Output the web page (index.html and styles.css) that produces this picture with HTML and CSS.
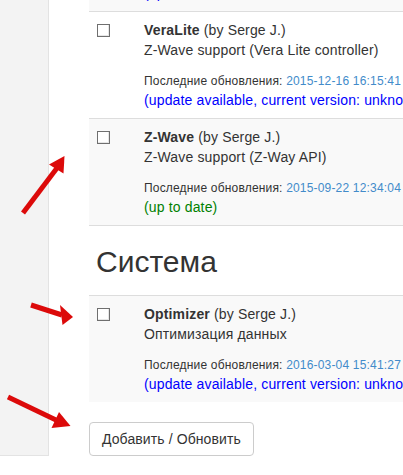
FILE: index.html
```html
<!DOCTYPE html>
<html lang="ru">
  <head>
    <meta charset="UTF-8" />
    <meta name="viewport" content="width=device-width, initial-scale=1.0" />
    <title>Плагины</title>
    <link rel="stylesheet" href="styles.css">
  </head>
  <body>
    <div class="page">
      <!-- Sidebar -->
      <aside class="sidebar"></aside>

      <!-- Plugin list -->
      <main class="content">
        <table class="plugins">
          <tbody>
            <tr>
              <td class="check"><input type="checkbox" /></td>
              <td>
                <div><b>Vera</b> (by Serge J.)</div>
                <p>Z-Wave support (Vera controller)</p>
                <div><small>Последние обновления: <span class="date">2015-12-16 16:10:02</span></small></div>
                <div class="status-new">(update available, current version: unknown)</div>
              </td>
            </tr>
            <tr>
              <td class="check"><input type="checkbox" /></td>
              <td>
                <div><b>VeraLite</b> (by Serge J.)</div>
                <p>Z-Wave support (Vera Lite controller)</p>
                <div><small>Последние обновления: <span class="date">2015-12-16 16:15:41</span></small></div>
                <div class="status-new">(update available, current version: unknown)</div>
              </td>
            </tr>
            <tr>
              <td class="check"><input type="checkbox" /></td>
              <td>
                <div><b>Z-Wave</b> (by Serge J.)</div>
                <p>Z-Wave support (Z-Way API)</p>
                <div><small>Последние обновления: <span class="date">2015-09-22 12:34:04</span></small></div>
                <div class="status-ok">(up to date)</div>
              </td>
            </tr>
          </tbody>
        </table>

        <h2>Система</h2>

        <table class="plugins last">
          <tbody>
            <tr>
              <td class="check"><input type="checkbox" /></td>
              <td>
                <div><b>Optimizer</b> (by Serge J.)</div>
                <p>Оптимизация данных</p>
                <div><small>Последние обновления: <span class="date">2016-03-04 15:41:27</span></small></div>
                <div class="status-new">(update available, current version: unknown)</div>
              </td>
            </tr>
          </tbody>
        </table>

        <button type="submit" class="btn">Добавить / Обновить</button>
      </main>
    </div>

    <!-- Annotation arrows -->
    <svg class="arrows" width="403" height="475" viewBox="0 0 403 475">
      <g fill="#dc0a0a" stroke="#dc0a0a" stroke-linecap="butt">
        <line x1="23" y1="213" x2="57" y2="168" stroke-width="5" />
        <polygon points="64.5,156 49,164.5 63.5,173.5" stroke="none" />
        <line x1="31" y1="305" x2="62" y2="315" stroke-width="5" />
        <polygon points="73,317 60,305 62.5,325" stroke="none" />
        <line x1="8" y1="397" x2="56" y2="420" stroke-width="5" />
        <polygon points="70.5,426 51.5,428 59,412" stroke="none" />
      </g>
    </svg>
  </body>
</html>
```
FILE: styles.css
```css
/* General Styles */
html,
body {
  margin: 0;
  padding: 0;
  overflow: hidden;
}
body {
  font-family: "Liberation Sans", Arial, sans-serif;
  font-size: 14px;
  line-height: 20px;
  color: #333;
  background-color: #fff;
}
.page {
  display: flex;
  margin-top: -96px;
}
.sidebar {
  width: 48px;
  flex-shrink: 0;
  background-color: #f3f3f3;
  border-right: 1px solid #e3e3e3;
  border-bottom: 1px solid #e3e3e3;
}
.content {
  flex: 1;
  min-width: 0;
  overflow: hidden;
  padding-left: 40px;
}

/* Plugin tables */
.plugins {
  width: 620px;
  border-collapse: collapse;
  border-bottom: 1px solid #ddd;
}
.plugins.last {
  border-bottom: none;
}
.plugins td {
  border-top: 1px solid #ddd;
  padding: 8px;
  vertical-align: top;
  white-space: nowrap;
  letter-spacing: 0.15px;
}
.plugins tr:nth-child(odd) td {
  background-color: #f9f9f9;
}
.plugins td.check {
  width: 31px;
}
.plugins p {
  margin: 0 0 10px;
}
.plugins small {
  font-size: 12px;
  line-height: 1;
  letter-spacing: 0.18px;
}
.check input {
  appearance: none;
  display: block;
  width: 13px;
  height: 13px;
  margin: 4px 0 0;
  border: 1px solid #6f6f6f;
  background: #fff;
  box-shadow: inset -1px -1px 0 #e6e6e6;
}
.date {
  color: #428bca;
}
.status-new {
  color: #0000ff;
}
.status-ok {
  color: #008000;
}

h2 {
  font-size: 30px;
  font-weight: normal;
  line-height: 33px;
  margin: 19px 0 17px 7px;
}

.btn {
  margin-top: 20px;
  padding: 6px 12px;
  font-family: inherit;
  font-size: 14px;
  line-height: 20px;
  letter-spacing: 0.1px;
  color: #333;
  background-color: #fff;
  border: 1px solid #ccc;
  border-radius: 4px;
}

.arrows {
  position: absolute;
  top: 0;
  left: 0;
}
```
